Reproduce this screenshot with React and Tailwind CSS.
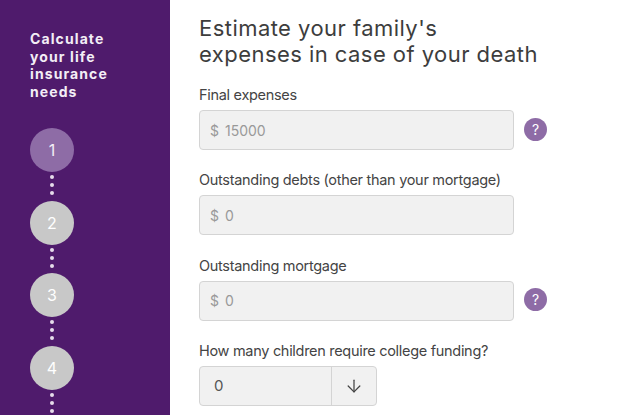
import { ArrowDown } from "lucide-react";

const steps = [1, 2, 3, 4];

const fields = [
  { label: "Final expenses", value: "15000", help: true },
  { label: "Outstanding debts (other than your mortgage)", value: "0", help: false },
  { label: "Outstanding mortgage", value: "0", help: true },
];

function Dots() {
  return (
    <div className="flex flex-col items-center gap-1 pb-[5.5px] pt-[3px]">
      {[0, 1, 2].map((dot) => (
        <div key={dot} className="h-1 w-1 rounded-full bg-[#e6dcea]" />
      ))}
    </div>
  );
}

function Field({ label, value, help }) {
  return (
    <div className="mb-[20.3px]">
      <p className="mb-[5px] text-[14.5px] leading-[20px] tracking-[-0.3px] text-[#444]">{label}</p>
      <div className="flex items-center">
        <div className="flex h-10 w-[315px] items-center gap-[6px] rounded border border-[#d4d4d4] bg-[#f1f1f1] pl-[10px] text-[14px] text-[#999]">
          <span>$</span>
          <span>{value}</span>
        </div>
        {help && (
          <div className="ml-[10px] flex h-[23px] w-[23px] -translate-y-px items-center justify-center rounded-full bg-[#8e6ca6] text-[14px] text-white">
            ?
          </div>
        )}
      </div>
    </div>
  );
}

export default function App() {
  return (
    <div className="flex h-[415px] w-[640px] overflow-hidden bg-white font-['Inter',sans-serif]">
      <div className="flex w-[170px] shrink-0 flex-col bg-[#4f1b6c] pl-[30px] pt-[30px]">
        <h2 className="text-[14px] font-bold leading-[17.5px] tracking-[1.1px] text-[#f3eef6]">
          Calculate
          <br />
          your life
          <br />
          insurance
          <br />
          needs
        </h2>
        <div className="mt-[28px] flex w-11 flex-col items-center">
          {steps.map((step) => (
            <div key={step} className="flex flex-col items-center">
              <div
                className={
                  step === 1
                    ? "flex h-11 w-11 items-center justify-center rounded-full bg-[#8e6ca6] text-[16px] text-[#f3eef6]"
                    : "flex h-11 w-11 items-center justify-center rounded-full bg-[#c8c8c8] text-[16px] text-white"
                }
              >
                {step}
              </div>
              <Dots />
            </div>
          ))}
        </div>
      </div>
      <div className="flex-1 pl-[29px] pt-[15px]">
        <h1 className="mb-[18px] text-[22px] font-normal leading-[26px] tracking-[0.45px] text-[#3d3d3d]">
          Estimate your family's
          <br />
          expenses in case of your death
        </h1>
        {fields.map((field) => (
          <Field key={field.label} {...field} />
        ))}
        <p className="mb-[5px] text-[14.5px] leading-[20px] tracking-[-0.3px] text-[#444]">
          How many children require college funding?
        </p>
        <div className="flex h-10 w-[178px] items-center rounded border border-[#d4d4d4] bg-[#f1f1f1] text-[15px] text-[#555]">
          <span className="flex-1 pl-[14px]">0</span>
          <div className="flex h-full w-[45px] items-center justify-center border-l border-[#d4d4d4]">
            <ArrowDown size={20} strokeWidth={1.5} className="text-[#444]" />
          </div>
        </div>
      </div>
    </div>
  );
}
